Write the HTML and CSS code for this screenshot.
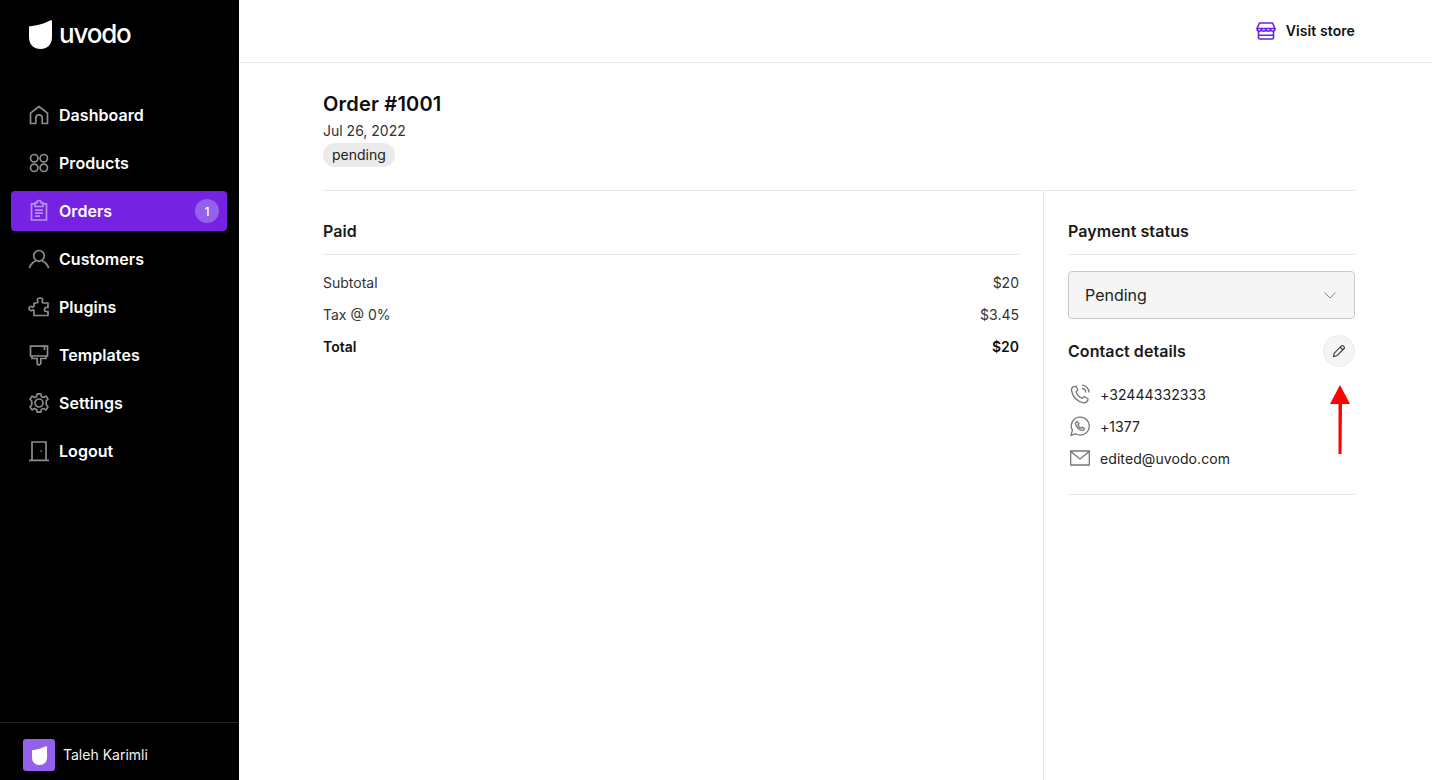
FILE: index.html
```html
<!DOCTYPE html>
<html lang="en">
<head>
<meta charset="utf-8">
<title>Order #1001</title>
<link rel="stylesheet" href="styles.css">
</head>
<body>
<div class="app">
  <aside class="sidebar">
    <div class="brand">
      <svg class="brand-mark" viewBox="0 0 23 29"><path d="M0 6.500C8 5.500 16 3.500 21 .5 22.300 -.2 23 .3 23 1.500V17C23 25 18 29 11.500 29S0 25 0 17Z" fill="#fff"/></svg>
      <span class="brand-name">uvodo</span>
    </div>
    <nav class="nav">
      <a class="nav-item"><svg class="nav-icon" viewBox="0 0 20 20"><path d="M1.500 18.500V8.200L10 1.500l8.500 6.700V18.500H13.200V13A3.200 3.200 0 0 0 6.800 13V18.500Z" stroke-linejoin="round"/></svg><span>Dashboard</span></a>
      <a class="nav-item"><svg class="nav-icon" viewBox="0 0 20 20"><circle cx="5.200" cy="5.200" r="3.700"/><circle cx="14.800" cy="5.200" r="3.700"/><circle cx="5.200" cy="14.800" r="3.700"/><circle cx="14.800" cy="14.800" r="3.700"/></svg><span>Products</span></a>
      <a class="nav-item active"><svg class="nav-icon" viewBox="0 0 20 20"><path d="M6 2.800H2.500V19H17.500V2.800H14M6 1.800H7.800A2.200 2.200 0 0 1 12.200 1.800H14V5.500H6ZM6 9.200H14M6 12.200H14M6 15.200H11"/></svg><span>Orders</span><span class="nav-badge">1</span></a>
      <a class="nav-item"><svg class="nav-icon" viewBox="0 0 20 20"><circle cx="10" cy="6.800" r="5.300"/><path d="M.3 19C1.800 15 5 12.300 7 12M19.700 19C18.200 15 15 12.300 13 12"/></svg><span>Customers</span></a>
      <a class="nav-item"><svg class="nav-icon" viewBox="0 0 20 20"><path d="M19 6H14.500C13.200 6 12.800 5 13.300 4.200 14.200 2.800 13.200 1 11 1S7.800 2.800 8.700 4.200C9.200 5 8.800 6 7.500 6H5V9C5 10 4 10.300 3.300 9.800 1.800 8.900 0 9.800 0 11.500S1.800 14.100 3.300 13.200C4 12.700 5 13 5 14V18.500H19V14.500H17C15 14.500 15 10.500 17 10.500H19Z" stroke-linejoin="round"/></svg><span>Plugins</span></a>
      <a class="nav-item"><svg class="nav-icon" viewBox="0 0 20 20"><path d="M1.500 1.200H18.500V11H1.500ZM15.500 1.200V5M3 11V13.500H8.200V18A1.800 1.800 0 0 0 11.800 18V13.500H17V11"/></svg><span>Templates</span></a>
      <a class="nav-item"><svg class="nav-icon" viewBox="0 0 20 20"><circle cx="10" cy="10" r="4"/><path d="M8.200 .8H11.800L12.400 3.400 14.600 4.400 17 3.100 19 6.200 17.200 8 17.200 12 19 13.800 17 16.900 14.600 15.600 12.400 16.600 11.800 19.200H8.200L7.600 16.600 5.400 15.600 3 16.900 1 13.800 2.800 12 2.800 8 1 6.200 3 3.100 5.400 4.400 7.600 3.400Z" stroke-linejoin="round"/></svg><span>Settings</span></a>
      <a class="nav-item"><svg class="nav-icon" viewBox="0 0 20 20"><path d="M3 19V1H17V19M0 19.300H20M11.500 10H13"/></svg><span>Logout</span></a>
    </nav>
    <div class="user">
      <span class="avatar"><svg viewBox="0 0 23 29"><path d="M0 6.500C8 5.500 16 3.500 21 .5 22.300 -.2 23 .3 23 1.500V17C23 25 18 29 11.500 29S0 25 0 17Z" fill="#fff"/></svg></span>
      <span class="user-name">Taleh Karimli</span>
    </div>
  </aside>
  <main class="main">
    <header class="topbar">
      <a class="visit">
        <svg class="visit-icon" viewBox="0 0 20 18"><path d="M3.500 1H16.500L19 6.500C19 10 14.500 10 14.500 7 14.500 10 10 10 10 7 10 10 5.500 10 5.500 7 5.500 10 1 10 1 6.500ZM1 6.500H19M2.500 9.500V15.500A1.500 1.500 0 0 0 4 17H16A1.500 1.500 0 0 0 17.500 15.500V9.500M2.500 13.200H17.500" stroke-linejoin="round"/></svg>
        <span>Visit store</span>
      </a>
    </header>
    <div class="content">
      <section class="order-head">
        <h1 class="order-title">Order #1001</h1>
        <div class="order-date">Jul 26, 2022</div>
        <span class="pill">pending</span>
      </section>
      <div class="columns">
        <section class="left">
          <h2 class="section-title ruled">Paid</h2>
          <div class="summary">
            <div class="row"><span>Subtotal</span><span>$20</span></div>
            <div class="row"><span>Tax @ 0%</span><span>$3.45</span></div>
            <div class="row total"><span>Total</span><span>$20</span></div>
          </div>
        </section>
        <section class="right">
          <h2 class="section-title ruled">Payment status</h2>
          <div class="select">
            <span>Pending</span>
            <svg class="chevron" viewBox="0 0 12 7"><path d="M.5 .5L6 6 11.500 .5"/></svg>
          </div>
          <div class="contact-head">
            <h2 class="section-title">Contact details</h2>
            <button class="edit" aria-label="Edit"><svg viewBox="0 0 14 14"><path d="M1.500 12.500L2.200 9.200 9.500 1.900A1.200 1.200 0 0 1 11.200 1.900L12.100 2.800A1.200 1.200 0 0 1 12.100 4.500L4.800 11.800ZM8.200 3.200L10.800 5.800"/></svg></button>
            <svg class="arrow" viewBox="0 0 20 70"><path d="M10 0L20 19H12L11.500 69H8.500L8.500 19H0Z" fill="#f00"/></svg>
          </div>
          <ul class="contacts">
            <li><svg class="c-icon" viewBox="0 0 20 20"><path d="M6 2.200L3.200 2.800C2 3.500 1.200 5 1.600 7 2.800 12.800 7.500 17.800 13.500 18.800 15.500 19 17 18 17.800 16.400L18 14.800 14.200 12.500 12 14.200C9.500 13.200 7 10.500 6 8L7.900 6ZM12 1.200A7.500 7.500 0 0 1 19 8.500M12 4.500A4.200 4.200 0 0 1 15.800 8.500"/></svg><span>+32444332333</span></li>
            <li><svg class="c-icon" viewBox="0 0 20 20"><path d="M1 19.300L2.400 14.400A9 9 0 1 1 5.700 17.800ZM7.200 5.600L5.800 6.600C5.300 8 6 10 7.800 12 9.800 14 12 14.800 13.400 14.200L14.500 12.800 12.400 11.200 11.200 12.200C10 11.800 8.400 10.200 8 9L9 7.800Z"/></svg><span>+1377</span></li>
            <li><svg class="c-icon" viewBox="0 0 20 20"><path d="M.7 3H19.300V17H.7ZM.7 3.500L10 11 19.300 3.500"/></svg><span>edited@uvodo.com</span></li>
          </ul>
        </section>
      </div>
    </div>
  </main>
</div>
</body>
</html>
```

FILE: styles.css
```css
* { box-sizing: border-box; }
html, body { margin: 0; height: 100%; }
body {
  font-family: Inter, "Liberation Sans", sans-serif;
  color: #111;
  background: #fff;
  overflow: hidden;
}
.app { display: flex; height: 780px; }

.sidebar {
  width: 239px;
  flex: none;
  background: #000;
  color: #fff;
  display: flex;
  flex-direction: column;
}
.brand {
  display: flex;
  align-items: center;
  gap: 7px;
  height: 95px;
  padding: 0 0 27px 29px;
}
.brand-mark { width: 23px; height: 29px; }
.brand-name { font-size: 26px; font-weight: 500; letter-spacing: -1.2px; line-height: 1; margin-top: 0; }
.nav {
  display: flex;
  flex-direction: column;
  gap: 8px;
  padding: 0 12px 0 11px;
  flex: 1;
}
.nav-item {
  display: flex;
  align-items: center;
  height: 40px;
  padding: 0 8px 0 18px;
  border-radius: 4px;
  font-size: 16px;
  font-weight: 600;
  letter-spacing: .05px;
  color: #fff;
}
.nav-item.active { background: #7522e3; }
.nav-icon {
  width: 20px;
  height: 20px;
  margin-right: 10px;
  flex: none;
  fill: none;
  stroke: #8c8c8c;
  stroke-width: 1.700;
  overflow: visible;
}
.active .nav-icon { stroke: #b890f2; }
.nav-badge {
  margin-left: auto;
  width: 24px;
  height: 24px;
  border-radius: 50%;
  background: #9361ea;
  font-size: 12px;
  font-weight: 500;
  display: flex;
  align-items: center;
  justify-content: center;
}
.user {
  height: 58px;
  border-top: 1px solid #222;
  display: flex;
  align-items: flex-start;
  padding: 16px 0 0 23px;
  gap: 8px;
}
.avatar {
  width: 32px;
  height: 32px;
  border-radius: 3px;
  background: #9361ea;
  display: flex;
  align-items: center;
  justify-content: center;
}
.avatar svg { width: 15px; height: 19px; }
.user-name { font-size: 14px; line-height: 32px; color: #f2f2f2; }

.main { flex: 1; min-width: 0; display: flex; flex-direction: column; }
.topbar {
  height: 63px;
  flex: none;
  border-bottom: 1px solid #ececec;
  display: flex;
  align-items: center;
  justify-content: flex-end;
  padding: 0 77px 1px 0;
}
.visit { display: flex; align-items: center; gap: 10px; font-size: 14px; font-weight: 600; letter-spacing: .1px; color: #111; }
.visit-icon { width: 20px; height: 18px; fill: none; stroke: #6c1fe0; stroke-width: 1.600; }

.content { flex: 1; padding: 0 77px 0 84px; display: flex; flex-direction: column; min-height: 0; }
.order-head {
  height: 128px;
  flex: none;
  padding-top: 29px;
  border-bottom: 1px solid #e6e6e6;
}
.order-title { margin: 0; font-size: 20px; font-weight: 600; letter-spacing: .2px; line-height: 24px; color: #0d0d0d; }
.order-date { font-size: 14px; line-height: 20px; margin-top: 5px; color: #333; }
.pill {
  display: block;
  width: fit-content;
  margin-top: 2px;
  height: 24px;
  line-height: 24px;
  padding: 0 9px;
  border-radius: 12px;
  background: #ebebeb;
  font-size: 14px;
  color: #222;
}
.columns { flex: 1; display: flex; min-height: 0; }
.left { width: 696px; flex: none; padding-top: 24px; }
.right {
  flex: 1;
  margin-left: 24px;
  border-left: 1px solid #e6e6e6;
  padding: 24px 0 0 24px;
}
.section-title { margin: 0; font-size: 16px; font-weight: 600; letter-spacing: .08px; line-height: 32px; color: #1a1a1a; }
.section-title.ruled { height: 40px; border-bottom: 1px solid #e6e6e6; }
.summary { padding-top: 11px; }
.row {
  display: flex;
  justify-content: space-between;
  height: 32px;
  align-items: center;
  font-size: 14px;
  color: #333;
}
.row.total { font-weight: 600; color: #111; }
.select {
  margin-top: 16px;
  height: 48px;
  border: 1px solid #c8c8c8;
  border-radius: 4px;
  background: #f5f5f5;
  display: flex;
  align-items: center;
  justify-content: space-between;
  padding: 0 18px 0 16px;
  font-size: 16px;
  color: #222;
}
.chevron { width: 12px; height: 7px; fill: none; stroke: #888; stroke-width: 1; }
.contact-head {
  position: relative;
  display: flex;
  align-items: center;
  justify-content: space-between;
  margin-top: 16px;
  height: 32px;
}
.edit {
  width: 32px;
  height: 32px;
  padding: 0;
  border: 1px solid #ebebeb;
  border-radius: 50%;
  background: #f5f5f5;
  display: flex;
  align-items: center;
  justify-content: center;
}
.edit svg { width: 14px; height: 14px; fill: none; stroke: #333; stroke-width: 1.100; }
.arrow { position: absolute; left: 262px; top: 50px; width: 20px; height: 70px; }
.contacts { list-style: none; margin: 11px 0 0; padding: 0 0 20px; border-bottom: 1px solid #e6e6e6; }
.contacts li {
  display: flex;
  align-items: center;
  gap: 10px;
  height: 32px;
  padding-left: 2px;
  font-size: 14px;
  letter-spacing: .08px;
  color: #222;
}
.c-icon { width: 20px; height: 20px; flex: none; fill: none; stroke: #777; stroke-width: 1.300; }
```
